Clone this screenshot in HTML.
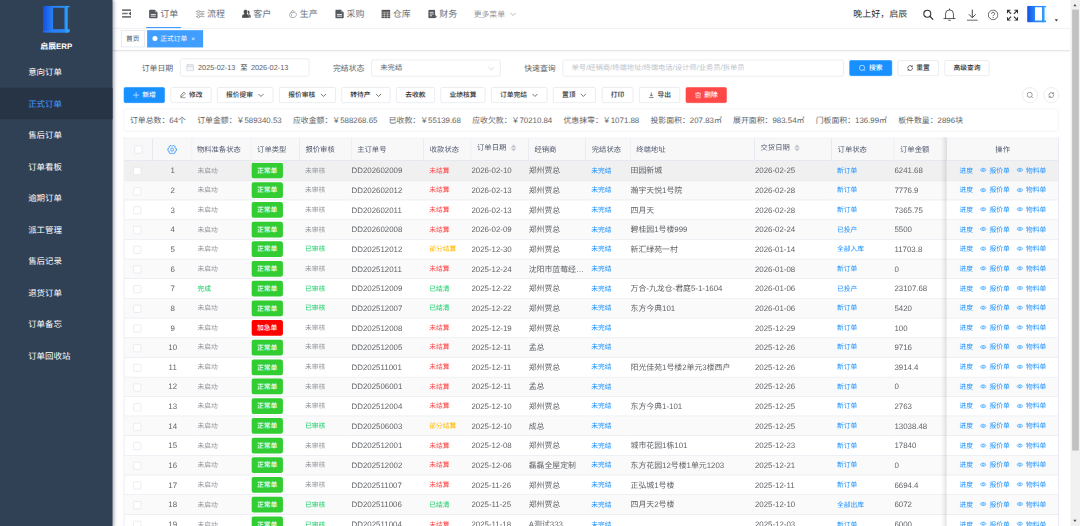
<!DOCTYPE html>
<html>
<head>
<meta charset="utf-8">
<title>启辰ERP - 正式订单</title>
<style>
*{box-sizing:border-box;margin:0;padding:0}
html,body{width:1080px;height:526px;overflow:hidden;background:#fff}
body{font-family:"Liberation Sans","Noto Sans CJK SC",sans-serif;text-rendering:geometricPrecision;}
#stage{position:absolute;left:0;top:0;width:1920px;height:935.2px;transform:scale(0.5625);transform-origin:0 0;overflow:hidden;background:#fff;color:#606266;font-size:14px}
/* sidebar */
#side{position:absolute;left:0;top:0;width:200px;height:936px;background:#304156;box-shadow:2px 0 6px rgba(0,21,41,.35);z-index:10}
#logo{position:absolute;left:76px;top:10px;width:48.500px;height:48px}
#brand{position:absolute;left:0;top:72px;width:200px;text-align:center;color:#fff;font-weight:bold;font-size:14px;line-height:20px}
.mi{position:absolute;left:0;width:200px;height:56px;line-height:60px;padding-left:50px;color:#fff;font-size:15px}
.mi.act{background:#263445;color:#409eff}
/* header */
#hdr{position:absolute;left:200px;top:0;width:1703px;height:51px;background:#fff;border-bottom:1px solid #eceef2}
#ham{position:absolute;left:17px;top:16px;width:16px;height:16px}
.tm{position:absolute;top:0;height:50px;line-height:53px;font-size:16px;color:#6e727a;white-space:nowrap;padding:0 5px;border-bottom:2px solid transparent}
.tm svg{width:16px;height:16px;vertical-align:-2px;margin-right:4px}
.tm.act{border-bottom-color:#409eff;color:#63676f}
#more{position:absolute;left:642px;top:0;line-height:53px;font-size:14px;color:#909399}
#hello{position:absolute;left:1317px;top:0;line-height:52px;font-size:16px;color:#303133;white-space:nowrap}
.hi{position:absolute;top:14px;width:20px;height:20px;color:#303133}
#avatar{position:absolute;left:1626px;top:10px;width:34px;height:30px}
#caret{position:absolute;left:1675px;top:34px;width:0;height:0;border:3.800px solid transparent;border-top:4.500px solid #3a3f4a}
/* tags */
#tags{position:absolute;left:200px;top:51px;width:1703px;height:39px;background:#fff;border-bottom:1px solid #d8dce5;box-shadow:0 1px 3px 0 rgba(0,0,0,.12),0 0 3px 0 rgba(0,0,0,.04)}
.tg1{position:absolute;top:3px;height:30px;line-height:28px;border:1px solid #d8dce5;font-size:12px;color:#495060;padding:0 8px;white-space:nowrap;background:#fff}
.tg1.act{background:#409eff;border-color:#409eff;color:#fff}
.tg1.act:before{content:"";display:inline-block;width:9px;height:9px;border-radius:50%;background:#fff;margin-right:5px;position:relative;top:0px}
/* form */
.lbl{position:absolute;top:105px;line-height:32px;font-size:14px;color:#606266;white-space:nowrap}
.inp{position:absolute;top:104px;height:32px;border:1px solid #dcdfe6;border-radius:4px;background:#fff;font-size:13px;color:#606266;line-height:30px;white-space:nowrap}
.ph{color:#c0c4cc}
.btn{position:absolute;height:28px;line-height:27.500px;border:1px solid #dcdfe6;border-radius:3px;background:#fff;font-size:12px;color:#303133;text-align:center;white-space:nowrap;font-weight:500}
.btn.pri{background:#1890ff;border-color:#1890ff;color:#fff}
.btn.dan{background:#ff4949;border-color:#ff4949;color:#fff}
.btn svg{width:12px;height:12px;vertical-align:-1.5px}
.btn .chev{margin-left:8px}
.circ{position:absolute;top:155px;width:28px;height:28px;border:1px solid #dcdfe6;border-radius:50%;background:#fff}
.circ svg{position:absolute;left:7px;top:7px;width:12px;height:12px}
/* stats */
#stats{position:absolute;left:220px;top:193px;width:1662px;height:41px;border:1px solid #ebeef5;border-radius:4px;font-size:14px;line-height:40px;padding-left:10px;color:#606266;white-space:nowrap;word-spacing:0}
#stats span{margin-right:20px}
/* table */
#tblwrap{position:absolute;left:220px;top:244.500px;width:1662px;height:700px;overflow:hidden;border-left:1px solid #d8dde8;border-right:1px solid #d8dde8;border-top:1px solid #d8dde8}
table{border-collapse:separate;border-spacing:0;table-layout:fixed;width:1661px;font-size:13px;color:#606266}
th{height:40px;background:#f8f8f9;border-right:1px solid #d8dde8;border-bottom:1px solid #d8dde8;text-align:left;padding-left:10px;font-weight:normal;color:#515a6e;font-size:13px;white-space:nowrap}
td{height:34.950px;border-bottom:1px solid #e1e6ee;padding-left:9px;white-space:nowrap;overflow:hidden;font-size:14px;color:#606266}
tr.hv td{height:36.200px}
tr.r2 td{height:34.400px}
.stripe{position:absolute;left:0;width:1661px;height:34.950px;background:#fafafa}
table{position:relative}
td.cbx{text-align:center;padding-left:0;padding-right:5px}
td.np{padding-left:0}
td.c,th.c{text-align:center;padding-left:0}
td.tg{padding-left:0}
.s12{font-size:12px;position:relative;top:-.800px}
.gray{color:#909399}.green{color:#13ce66}.red{color:#ff4949}.orange{color:#ffba00}.blue{color:#1890ff}
.tag{position:relative;top:0;display:inline-block;height:28px;line-height:28px;padding:0 10px;background:#32cd32;color:#fff;font-weight:500;font-size:12px;border-radius:4px;vertical-align:middle}
.tag.red{background:#ff0000}
.cb{display:inline-block;width:14px;height:14px;border:1px solid #dcdfe6;border-radius:2px;background:#fff;vertical-align:middle}
.ell{overflow:hidden;text-overflow:ellipsis;white-space:nowrap;width:99px}
td.op,th.op{text-align:center;padding-left:0;box-shadow:none}
.lk{color:#1890ff;font-size:12px;margin:0 6px;position:relative;top:-.800px}
.eye{width:12px;height:12px;vertical-align:-1.5px;margin-right:5px}
.sorter{display:inline-block;position:relative;width:10px;height:12px;vertical-align:-2px;margin-left:8px}
th.so{padding-bottom:6.500px}
.sorter:before{content:"";position:absolute;left:0;top:-5px;border:5px solid transparent;border-bottom-color:#c0c4cc}
.sorter:after{content:"";position:absolute;left:0;top:7px;border:5px solid transparent;border-top-color:#c0c4cc}
#fixshadow{position:absolute;left:1673px;top:244px;width:10px;height:700px;background:linear-gradient(to right,rgba(0,0,0,0),rgba(0,0,0,.10));pointer-events:none}
/* scrollbar */
#sb{position:absolute;left:1903px;top:0;width:17px;height:936px;background:#f1f1f1}
#sbthumb{position:absolute;left:2.500px;top:17px;width:12.500px;height:784px;background:#c1c1c1}
.arr{position:absolute;left:4.5px;width:0;height:0;border:4px solid transparent}
</style>
</head>
<body>
<div id="stage">

<div id="side">
  <svg id="logo" viewBox="0 0 49 49">
    <defs>
      <linearGradient id="lg1" x1="0" y1="0" x2="1" y2="0"><stop offset="0" stop-color="#1450e0"/><stop offset=".400" stop-color="#2a84f6"/><stop offset="1" stop-color="#2b9bff"/></linearGradient>
      <linearGradient id="lg2" x1="0" y1="0" x2="1" y2="0"><stop offset="0" stop-color="#1f86f8"/><stop offset="1" stop-color="#33b2ff"/></linearGradient>
    </defs>
    <path d="M3 0H46Q49 0 49 3V46Q49 49 46 49H3Q0 49 0 46V3Q0 0 3 0Z" fill="url(#lg1)"/>
    <path d="M18.500 4H39.500V43H18.500Z" fill="#304156"/><path d="M0 46.500L18.500 43H39.500L38.500 49H3Q0 49 0 46.500Z" fill="#2a7df5" opacity=".55"/>
    <path d="M39.500 0H45V49H39.500Z" fill="url(#lg2)"/>
    <path d="M45 3H49V43H45Z" fill="#304156"/>
  </svg>
  <div id="brand">启辰ERP</div>
  <div class="mi" style="top:100px">意向订单</div>
  <div class="mi act" style="top:156px">正式订单</div>
  <div class="mi" style="top:212px">售后订单</div>
  <div class="mi" style="top:268px">订单看板</div>
  <div class="mi" style="top:324px">逾期订单</div>
  <div class="mi" style="top:380px">派工管理</div>
  <div class="mi" style="top:436px">售后记录</div>
  <div class="mi" style="top:492px">退货订单</div>
  <div class="mi" style="top:548px">订单备忘</div>
  <div class="mi" style="top:604px">订单回收站</div>
</div>

<div id="hdr">
  <svg id="ham" viewBox="0 0 16 16"><path d="M0 .5h16v3H0zM0 6.500h10v3H0zM0 12.500h16v3H0z" fill="#777"/><path d="M16 4.500v7L11.500 8z" fill="#555"/></svg>
  <div class="tm act" style="left:60px"><svg viewBox="0 0 16 16"><path d="M2 0h8l5 5v9a2 2 0 0 1-2 2H2a2 2 0 0 1-2-2V2a2 2 0 0 1 2-2z" fill="#55585e"/><path d="M10.300 0v3.700a1 1 0 0 0 1 1H15z" fill="#9fa2a8"/><path d="M3 8.700h9M3 11.700h9" stroke="#fff" stroke-width="1.500"/></svg>订单</div>
  <div class="tm" style="left:143px"><svg viewBox="0 0 16 16"><path d="M0 3.500h16M0 8h16M0 12.500h16" stroke="#85888e" stroke-width="1.200" fill="none"/><circle cx="5" cy="3.500" r="2" fill="#fff" stroke="#85888e" stroke-width="1.200"/><circle cx="11" cy="8" r="2" fill="#fff" stroke="#85888e" stroke-width="1.200"/><circle cx="5" cy="12.500" r="2" fill="#fff" stroke="#85888e" stroke-width="1.200"/></svg>流程</div>
  <div class="tm" style="left:225px"><svg viewBox="0 0 16 16"><path d="M10.500 1.500a3.200 3.600 0 0 1 2.500 6c-.3.500-.2 1 .4 1.300 1.600.7 2.600 1.500 2.600 3.700v1.500h-3.500z" fill="#4d4d4d"/><path d="M6.500 0a3.600 4 0 0 1 2.700 6.800c-.4.600-.3 1.200.5 1.500 2 .8 3.300 1.800 3.300 4.500V15H0v-2.200c0-2.700 1.300-3.700 3.300-4.500.8-.3.900-.9.500-1.500A3.600 4 0 0 1 6.500 0z" fill="#4d4d4d" stroke="#fff" stroke-width=".6"/></svg>客户</div>
  <div class="tm" style="left:308px"><svg viewBox="0 0 16 16"><path d="M4.500 4.500L7.500 1l3 3.500M4 5h7l4 3.500-4 5.500H4L1.500 10z" fill="none" stroke="#8a8d93" stroke-width="1.200" stroke-linejoin="round"/><path d="M3.500 6.500c2.500.5 2.500 5 0 6" fill="none" stroke="#8a8d93" stroke-width="1.100"/></svg>生产</div>
  <div class="tm" style="left:391px"><svg viewBox="0 0 16 16"><path d="M2 0h8l5 5v9a2 2 0 0 1-2 2H2a2 2 0 0 1-2-2V2a2 2 0 0 1 2-2z" fill="#55585e"/><path d="M10.300 0v3.700a1 1 0 0 0 1 1H15z" fill="#9fa2a8"/><path d="M3 8.700h9M3 11.700h9" stroke="#fff" stroke-width="1.500"/></svg>采购</div>
  <div class="tm" style="left:473px"><svg viewBox="0 0 16 16"><path d="M0 .5h16v15H0z" fill="#4d4d4d"/><path d="M0 4.500h16M0 8.300h16M0 12h16M5.300 4.500v11M10.700 4.500v11" stroke="#fff" stroke-width=".8"/></svg>仓库</div>
  <div class="tm" style="left:556px"><svg viewBox="0 0 16 16"><path d="M2 .5h9a1.500 1.500 0 0 1 1.500 1.500v12a1.500 1.500 0 0 1-1.500 1.500H2A1.500 1.500 0 0 1 .5 14V2A1.500 1.500 0 0 1 2 .5z" fill="#55585e"/><path d="M3 5h7M3 8h7M3 11h4" stroke="#fff" stroke-width="1.300"/><path d="M9 12.500h5.500M12.500 10l2.500 2.500-2.500 2.500" fill="none" stroke="#55585e" stroke-width="1.600"/></svg>财务</div>
  <div id="more">更多菜单<svg viewBox="0 0 12 12" style="width:12px;height:12px;margin-left:8px;vertical-align:0px"><path d="M1.500 4L6 8.500 10.500 4" fill="none" stroke="#909399" stroke-width="1.200"/></svg></div>
  <div id="hello">晚上好，启辰</div>
  <svg class="hi" style="left:1440px;top:16px" viewBox="0 0 20 20"><circle cx="8.500" cy="8.500" r="6.200" fill="none" stroke="#303133" stroke-width="1.900"/><path d="M13 13l5.500 5.500" stroke="#303133" stroke-width="2.200" stroke-linecap="round"/></svg>
  <svg class="hi" style="left:1476px;top:14px;width:24px;height:24px" viewBox="0 0 24 24"><path d="M2 19h20M5 19v-8.500a7 7 0 0 1 14 0V19M10.500 22h3M12 3.500V2" fill="none" stroke="#303133" stroke-width="1.400" stroke-linecap="round"/></svg>
  <svg class="hi" style="left:1518px;top:16px;width:21px;height:21px" viewBox="0 0 21 21"><path d="M10.500 1v14M4.500 9.500l6 6 6-6M1 20h19" fill="none" stroke="#303133" stroke-width="1.600"/></svg>
  <svg class="hi" style="left:1556px;top:17px;width:19px;height:19px" viewBox="0 0 19 19"><circle cx="9.500" cy="9.500" r="8.500" fill="none" stroke="#303133" stroke-width="1.300"/><path d="M6.800 7.500a2.700 2.700 0 1 1 3.800 2.400c-.8.400-1.100.9-1.100 1.800" fill="none" stroke="#303133" stroke-width="1.300"/><circle cx="9.500" cy="14" r=".9" fill="#303133"/></svg>
  <svg class="hi" style="left:1590px;top:17px;width:20px;height:20px" viewBox="0 0 20 20"><path d="M1 6.500V1h5.500M1.500 1.500l6 6M19 6.500V1h-5.500M18.500 1.500l-6 6M1 13.500V19h5.500M1.500 18.500l6-6M19 13.500V19h-5.500M18.500 18.500l-6-6" fill="none" stroke="#303133" stroke-width="2"/></svg>
  <svg id="avatar" viewBox="0 0 34 30">
    <path d="M2 0H32Q34 0 34 2V28Q34 30 32 30H2Q0 30 0 28V2Q0 0 2 0Z" fill="url(#lg1)"/>
    <path d="M14 3H27V26.500H14Z" fill="#fff"/>
    <path d="M27 0H31V30H27Z" fill="url(#lg2)"/>
    <path d="M31 3H34V26.500H31Z" fill="#fff"/>
  </svg>
  <div id="caret"></div>
</div>

<div id="tags">
  <div class="tg1" style="left:15px">首页</div>
  <div class="tg1 act" style="left:62px;width:99px">正式订单<span style="margin-left:7px;font-size:11px;position:relative;top:-1px">×</span></div>
</div>

<!-- search form -->
<div class="lbl" style="left:252px">订单日期</div>
<div class="inp" style="left:320px;width:230px">
  <svg viewBox="0 0 14 14" style="position:absolute;left:10px;top:8px;width:14px;height:14px"><rect x="1" y="2" width="12" height="11" rx="1" fill="#f5f7fa" stroke="#c0c4cc" stroke-width="1"/><path d="M1 5.500h12M4 .5v3M10 .5v3" stroke="#c0c4cc" stroke-width="1"/></svg>
  <span style="position:absolute;left:31px">2025-02-13</span><span style="position:absolute;left:106px;color:#303133">至</span><span style="position:absolute;left:125px">2026-02-13</span>
</div>
<div class="lbl" style="left:592px;top:105px">完结状态</div>
<div class="inp" style="left:660px;width:230px;padding-left:15px;top:106px;height:30px;line-height:28px">未完结<svg viewBox="0 0 12 12" style="position:absolute;right:9px;top:8px;width:13px;height:13px"><path d="M1.500 4L6 8.500 10.500 4" fill="none" stroke="#c0c4cc" stroke-width="1.100"/></svg></div>
<div class="lbl" style="left:932px;top:105px">快速查询</div>
<div class="inp" style="left:1000px;width:500px;padding-left:15px;top:106px;height:30px;line-height:28px"><span class="ph">单号/经销商/终端地址/终端电话/设计师/业务员/拆单员</span></div>
<div class="btn pri" style="left:1510px;top:107px;width:76px"><svg viewBox="0 0 12 12" style="margin-right:6px"><circle cx="5.500" cy="5.500" r="4.700" fill="none" stroke="#fff" stroke-width="1.100"/><path d="M9 9l2.700 2.700" stroke="#fff" stroke-width="1.100"/></svg>搜索</div>
<div class="btn" style="left:1596px;top:107px;width:73px"><svg viewBox="0 0 12 12" style="margin-right:5px"><path d="M1.800 6.800A4.300 4.300 0 0 1 9.300 3.200M10.200 5.200A4.300 4.300 0 0 1 2.700 8.800" fill="none" stroke="#303133" stroke-width="1.200"/><path d="M9.800 1v2.600H7.200M2.200 11V8.400h2.600" fill="none" stroke="#303133" stroke-width="1.100"/></svg>重置</div>
<div class="btn" style="left:1679px;top:107px;width:80px">高级查询</div>

<!-- toolbar -->
<div class="btn pri" style="left:220px;top:155px;width:73px"><svg viewBox="0 0 12 12" style="margin-right:5px"><path d="M6 .5v11M.5 6h11" stroke="#fff" stroke-width="1"/></svg>新增</div>
<div class="btn" style="left:303px;top:155px;width:73px"><svg viewBox="0 0 12 12" style="margin-right:5px"><path d="M8 .8l2.200 2.200L5 8.200l-2.700.5.500-2.700zM1.500 10.800h9" fill="none" stroke="#303133" stroke-width="1"/></svg>修改</div>
<div class="btn" style="left:386px;top:155px;width:100px">报价提审<svg class="chev" viewBox="0 0 12 12"><path d="M1.500 4L6 8.500 10.500 4" fill="none" stroke="#303133" stroke-width="1.200"/></svg></div>
<div class="btn" style="left:496px;top:155px;width:101px">报价审核<svg class="chev" viewBox="0 0 12 12"><path d="M1.500 4L6 8.500 10.500 4" fill="none" stroke="#303133" stroke-width="1.200"/></svg></div>
<div class="btn" style="left:607px;top:155px;width:87px">转待产<svg class="chev" viewBox="0 0 12 12"><path d="M1.500 4L6 8.500 10.500 4" fill="none" stroke="#303133" stroke-width="1.200"/></svg></div>
<div class="btn" style="left:704px;top:155px;width:69px">去收款</div>
<div class="btn" style="left:783px;top:155px;width:80px">业绩核算</div>
<div class="btn" style="left:873px;top:155px;width:100px">订单完结<svg class="chev" viewBox="0 0 12 12"><path d="M1.500 4L6 8.500 10.500 4" fill="none" stroke="#303133" stroke-width="1.200"/></svg></div>
<div class="btn" style="left:983px;top:155px;width:76px">置顶<svg class="chev" viewBox="0 0 12 12"><path d="M1.500 4L6 8.500 10.500 4" fill="none" stroke="#303133" stroke-width="1.200"/></svg></div>
<div class="btn" style="left:1070px;top:155px;width:56px">打印</div>
<div class="btn" style="left:1136px;top:155px;width:73px"><svg viewBox="0 0 12 12" style="margin-right:5px"><path d="M6 1.500v6M3.500 5.500L6 8l2.500-2.500M2 10.500h8" fill="none" stroke="#303133" stroke-width="1.100"/></svg>导出</div>
<div class="btn dan" style="left:1219px;top:155px;width:73px"><svg viewBox="0 0 12 12" style="margin-right:5px"><path d="M1 3h10M4.500 3V1.500h3V3M2.500 3v8h7V3M5 5.500v3M7 5.500v3" fill="none" stroke="#fff" stroke-width="1.100"/></svg>删除</div>
<div class="circ" style="left:1817px"><svg viewBox="0 0 12 12"><circle cx="5.500" cy="5.500" r="4.500" fill="none" stroke="#606266" stroke-width="1.100"/><path d="M8.800 8.800L11.500 11.500" stroke="#606266" stroke-width="1.100"/></svg></div>
<div class="circ" style="left:1855px"><svg viewBox="0 0 12 12"><path d="M1.800 6.800A4.300 4.300 0 0 1 9.300 3.200M10.200 5.200A4.300 4.300 0 0 1 2.700 8.800" fill="none" stroke="#606266" stroke-width="1.200"/><path d="M9.800 1v2.600H7.200M2.200 11V8.400h2.600" fill="none" stroke="#606266" stroke-width="1.100"/></svg></div>

<div id="stats"><span>订单总数：64个</span><span>订单金额：￥589340.53</span><span>应收金额：￥588268.65</span><span>已收款：￥55139.68</span><span>应收欠款：￥70210.84</span><span>优惠抹零：￥1071.88</span><span>投影面积：207.83㎡</span><span>展开面积：983.54㎡</span><span>门板面积：136.99㎡</span><span>板件数量：2896块</span></div>

<div id="tblwrap">
<div class="stripe" style="top:40px;height:36.190px;background:#f0f0f0"></div>
<div class="stripe" style="top:76.190px;height:34.390px"></div>
<div class="stripe" style="top:145.516px;height:34.940px"></div>
<div class="stripe" style="top:215.391px;height:34.940px"></div>
<div class="stripe" style="top:285.266px;height:34.940px"></div>
<div class="stripe" style="top:355.141px;height:34.940px"></div>
<div class="stripe" style="top:425.016px;height:34.940px"></div>
<div class="stripe" style="top:494.891px;height:34.940px"></div>
<div class="stripe" style="top:564.766px;height:34.940px"></div>
<div class="stripe" style="top:634.641px;height:34.940px"></div>
<table>
<colgroup><col style="width:51px"><col style="width:70px"><col style="width:105px"><col style="width:86px"><col style="width:92px"><col style="width:129px"><col style="width:84px"><col style="width:102px"><col style="width:102px"><col style="width:79px"><col style="width:221px"><col style="width:137px"><col style="width:111px"><col style="width:94px"><col style="width:198px"></colgroup>
<thead><tr>
<th class="c"><span class="cb"></span></th>
<th class="c"><svg viewBox="0 0 18 18" style="width:18px;height:18px;vertical-align:middle;position:relative;left:-1px;top:.500px"><path d="M15.11 6.78L16.57 7.11L16.57 10.89L15.11 11.22L13.98 13.18L14.42 14.61L11.15 16.50L10.13 15.40L7.87 15.40L6.85 16.50L3.58 14.61L4.02 13.18L2.89 11.22L1.43 10.89L1.43 7.11L2.89 6.78L4.02 4.82L3.58 3.39L6.85 1.50L7.87 2.60L10.13 2.60L11.15 1.50L14.42 3.39L13.98 4.82Z" fill="none" stroke="#3d9bff" stroke-width="1.700" stroke-linejoin="round"/><circle cx="9" cy="9" r="2.700" fill="none" stroke="#3d9bff" stroke-width="1.600"/></svg></th>
<th style="padding-left:8px">物料准备状态</th><th>订单类型</th><th>报价审核</th><th>主订单号</th><th>收款状态</th>
<th class="so">订单日期<span class="sorter"></span></th><th>经销商</th><th>完结状态</th><th>终端地址</th>
<th class="so">交货日期<span class="sorter"></span></th><th>订单状态</th><th>订单金额</th><th class="op">操作</th>
</tr></thead>
<tbody>
<tr class="hv"><td class="cbx"><span class="cb"></span></td><td class="c idx">1</td><td><span class="gray s12">未启动</span></td><td class="tg"><span class="tag">正常单</span></td><td><span class="gray s12">未审核</span></td><td class="np">DD202602009</td><td><span class="red s12">未结算</span></td><td class="np">2026-02-10</td><td class="np"><div class="ell">郑州贾总</div></td><td><span class="blue s12">未完结</span></td><td class="np">田园新城</td><td class="np">2026-02-25</td><td><span class="blue s12">新订单</span></td><td class="np">6241.68</td><td class="op"><span class="lk">进度</span><span class="lk"><svg class="eye" viewBox="0 0 12 12"><path d="M.6 6C2.600 2.300 9.400 2.300 11.400 6 9.400 9.700 2.600 9.700.6 6z" fill="none" stroke="currentColor" stroke-width="1"/><circle cx="6" cy="6" r="1.900" fill="none" stroke="currentColor" stroke-width="1"/></svg>报价单</span><span class="lk"><svg class="eye" viewBox="0 0 12 12"><path d="M.6 6C2.600 2.300 9.400 2.300 11.400 6 9.400 9.700 2.600 9.700.6 6z" fill="none" stroke="currentColor" stroke-width="1"/><circle cx="6" cy="6" r="1.900" fill="none" stroke="currentColor" stroke-width="1"/></svg>物料单</span></td></tr>
<tr class="st r2"><td class="cbx"><span class="cb"></span></td><td class="c idx">2</td><td><span class="gray s12">未启动</span></td><td class="tg"><span class="tag">正常单</span></td><td><span class="gray s12">未审核</span></td><td class="np">DD202602012</td><td><span class="red s12">未结算</span></td><td class="np">2026-02-13</td><td class="np"><div class="ell">郑州贾总</div></td><td><span class="blue s12">未完结</span></td><td class="np">瀚宇天悦1号院</td><td class="np">2026-02-28</td><td><span class="blue s12">新订单</span></td><td class="np">7776.9</td><td class="op"><span class="lk">进度</span><span class="lk"><svg class="eye" viewBox="0 0 12 12"><path d="M.6 6C2.600 2.300 9.400 2.300 11.400 6 9.400 9.700 2.600 9.700.6 6z" fill="none" stroke="currentColor" stroke-width="1"/><circle cx="6" cy="6" r="1.900" fill="none" stroke="currentColor" stroke-width="1"/></svg>报价单</span><span class="lk"><svg class="eye" viewBox="0 0 12 12"><path d="M.6 6C2.600 2.300 9.400 2.300 11.400 6 9.400 9.700 2.600 9.700.6 6z" fill="none" stroke="currentColor" stroke-width="1"/><circle cx="6" cy="6" r="1.900" fill="none" stroke="currentColor" stroke-width="1"/></svg>物料单</span></td></tr>
<tr class=""><td class="cbx"><span class="cb"></span></td><td class="c idx">3</td><td><span class="gray s12">未启动</span></td><td class="tg"><span class="tag">正常单</span></td><td><span class="gray s12">未审核</span></td><td class="np">DD202602011</td><td><span class="red s12">未结算</span></td><td class="np">2026-02-13</td><td class="np"><div class="ell">郑州贾总</div></td><td><span class="blue s12">未完结</span></td><td class="np">四月天</td><td class="np">2026-02-28</td><td><span class="blue s12">新订单</span></td><td class="np">7365.75</td><td class="op"><span class="lk">进度</span><span class="lk"><svg class="eye" viewBox="0 0 12 12"><path d="M.6 6C2.600 2.300 9.400 2.300 11.400 6 9.400 9.700 2.600 9.700.6 6z" fill="none" stroke="currentColor" stroke-width="1"/><circle cx="6" cy="6" r="1.900" fill="none" stroke="currentColor" stroke-width="1"/></svg>报价单</span><span class="lk"><svg class="eye" viewBox="0 0 12 12"><path d="M.6 6C2.600 2.300 9.400 2.300 11.400 6 9.400 9.700 2.600 9.700.6 6z" fill="none" stroke="currentColor" stroke-width="1"/><circle cx="6" cy="6" r="1.900" fill="none" stroke="currentColor" stroke-width="1"/></svg>物料单</span></td></tr>
<tr class="st"><td class="cbx"><span class="cb"></span></td><td class="c idx">4</td><td><span class="gray s12">未启动</span></td><td class="tg"><span class="tag">正常单</span></td><td><span class="gray s12">未审核</span></td><td class="np">DD202602008</td><td><span class="red s12">未结算</span></td><td class="np">2026-02-09</td><td class="np"><div class="ell">郑州贾总</div></td><td><span class="blue s12">未完结</span></td><td class="np">碧桂园1号楼999</td><td class="np">2026-02-24</td><td><span class="blue s12">已投产</span></td><td class="np">5500</td><td class="op"><span class="lk">进度</span><span class="lk"><svg class="eye" viewBox="0 0 12 12"><path d="M.6 6C2.600 2.300 9.400 2.300 11.400 6 9.400 9.700 2.600 9.700.6 6z" fill="none" stroke="currentColor" stroke-width="1"/><circle cx="6" cy="6" r="1.900" fill="none" stroke="currentColor" stroke-width="1"/></svg>报价单</span><span class="lk"><svg class="eye" viewBox="0 0 12 12"><path d="M.6 6C2.600 2.300 9.400 2.300 11.400 6 9.400 9.700 2.600 9.700.6 6z" fill="none" stroke="currentColor" stroke-width="1"/><circle cx="6" cy="6" r="1.900" fill="none" stroke="currentColor" stroke-width="1"/></svg>物料单</span></td></tr>
<tr class=""><td class="cbx"><span class="cb"></span></td><td class="c idx">5</td><td><span class="gray s12">未启动</span></td><td class="tg"><span class="tag">正常单</span></td><td><span class="green s12">已审核</span></td><td class="np">DD202512012</td><td><span class="orange s12">部分结算</span></td><td class="np">2025-12-30</td><td class="np"><div class="ell">郑州贾总</div></td><td><span class="blue s12">未完结</span></td><td class="np">新汇绿苑一村</td><td class="np">2026-01-14</td><td><span class="blue s12">全部入库</span></td><td class="np">11703.8</td><td class="op"><span class="lk">进度</span><span class="lk"><svg class="eye" viewBox="0 0 12 12"><path d="M.6 6C2.600 2.300 9.400 2.300 11.400 6 9.400 9.700 2.600 9.700.6 6z" fill="none" stroke="currentColor" stroke-width="1"/><circle cx="6" cy="6" r="1.900" fill="none" stroke="currentColor" stroke-width="1"/></svg>报价单</span><span class="lk"><svg class="eye" viewBox="0 0 12 12"><path d="M.6 6C2.600 2.300 9.400 2.300 11.400 6 9.400 9.700 2.600 9.700.6 6z" fill="none" stroke="currentColor" stroke-width="1"/><circle cx="6" cy="6" r="1.900" fill="none" stroke="currentColor" stroke-width="1"/></svg>物料单</span></td></tr>
<tr class="st"><td class="cbx"><span class="cb"></span></td><td class="c idx">6</td><td><span class="gray s12">未启动</span></td><td class="tg"><span class="tag">正常单</span></td><td><span class="gray s12">未审核</span></td><td class="np">DD202512011</td><td><span class="red s12">未结算</span></td><td class="np">2025-12-24</td><td class="np"><div class="ell">沈阳市蓝莓经销商</div></td><td><span class="blue s12">未完结</span></td><td class="np"></td><td class="np">2026-01-08</td><td><span class="blue s12">新订单</span></td><td class="np">0</td><td class="op"><span class="lk">进度</span><span class="lk"><svg class="eye" viewBox="0 0 12 12"><path d="M.6 6C2.600 2.300 9.400 2.300 11.400 6 9.400 9.700 2.600 9.700.6 6z" fill="none" stroke="currentColor" stroke-width="1"/><circle cx="6" cy="6" r="1.900" fill="none" stroke="currentColor" stroke-width="1"/></svg>报价单</span><span class="lk"><svg class="eye" viewBox="0 0 12 12"><path d="M.6 6C2.600 2.300 9.400 2.300 11.400 6 9.400 9.700 2.600 9.700.6 6z" fill="none" stroke="currentColor" stroke-width="1"/><circle cx="6" cy="6" r="1.900" fill="none" stroke="currentColor" stroke-width="1"/></svg>物料单</span></td></tr>
<tr class=""><td class="cbx"><span class="cb"></span></td><td class="c idx">7</td><td><span class="green s12">完成</span></td><td class="tg"><span class="tag">正常单</span></td><td><span class="green s12">已审核</span></td><td class="np">DD202512009</td><td><span class="green s12">已结清</span></td><td class="np">2025-12-22</td><td class="np"><div class="ell">郑州贾总</div></td><td><span class="blue s12">未完结</span></td><td class="np">万合-九龙仓-君庭5-1-1604</td><td class="np">2026-01-06</td><td><span class="blue s12">已投产</span></td><td class="np">23107.68</td><td class="op"><span class="lk">进度</span><span class="lk"><svg class="eye" viewBox="0 0 12 12"><path d="M.6 6C2.600 2.300 9.400 2.300 11.400 6 9.400 9.700 2.600 9.700.6 6z" fill="none" stroke="currentColor" stroke-width="1"/><circle cx="6" cy="6" r="1.900" fill="none" stroke="currentColor" stroke-width="1"/></svg>报价单</span><span class="lk"><svg class="eye" viewBox="0 0 12 12"><path d="M.6 6C2.600 2.300 9.400 2.300 11.400 6 9.400 9.700 2.600 9.700.6 6z" fill="none" stroke="currentColor" stroke-width="1"/><circle cx="6" cy="6" r="1.900" fill="none" stroke="currentColor" stroke-width="1"/></svg>物料单</span></td></tr>
<tr class="st"><td class="cbx"><span class="cb"></span></td><td class="c idx">8</td><td><span class="gray s12">未启动</span></td><td class="tg"><span class="tag">正常单</span></td><td><span class="green s12">已审核</span></td><td class="np">DD202512007</td><td><span class="green s12">已结清</span></td><td class="np">2025-12-22</td><td class="np"><div class="ell">郑州贾总</div></td><td><span class="blue s12">未完结</span></td><td class="np">东方今典101</td><td class="np">2026-01-06</td><td><span class="blue s12">新订单</span></td><td class="np">5420</td><td class="op"><span class="lk">进度</span><span class="lk"><svg class="eye" viewBox="0 0 12 12"><path d="M.6 6C2.600 2.300 9.400 2.300 11.400 6 9.400 9.700 2.600 9.700.6 6z" fill="none" stroke="currentColor" stroke-width="1"/><circle cx="6" cy="6" r="1.900" fill="none" stroke="currentColor" stroke-width="1"/></svg>报价单</span><span class="lk"><svg class="eye" viewBox="0 0 12 12"><path d="M.6 6C2.600 2.300 9.400 2.300 11.400 6 9.400 9.700 2.600 9.700.6 6z" fill="none" stroke="currentColor" stroke-width="1"/><circle cx="6" cy="6" r="1.900" fill="none" stroke="currentColor" stroke-width="1"/></svg>物料单</span></td></tr>
<tr class=""><td class="cbx"><span class="cb"></span></td><td class="c idx">9</td><td><span class="gray s12">未启动</span></td><td class="tg"><span class="tag red">加急单</span></td><td><span class="gray s12">未审核</span></td><td class="np">DD202512008</td><td><span class="red s12">未结算</span></td><td class="np">2025-12-19</td><td class="np"><div class="ell">郑州贾总</div></td><td><span class="blue s12">未完结</span></td><td class="np"></td><td class="np">2025-12-29</td><td><span class="blue s12">新订单</span></td><td class="np">100</td><td class="op"><span class="lk">进度</span><span class="lk"><svg class="eye" viewBox="0 0 12 12"><path d="M.6 6C2.600 2.300 9.400 2.300 11.400 6 9.400 9.700 2.600 9.700.6 6z" fill="none" stroke="currentColor" stroke-width="1"/><circle cx="6" cy="6" r="1.900" fill="none" stroke="currentColor" stroke-width="1"/></svg>报价单</span><span class="lk"><svg class="eye" viewBox="0 0 12 12"><path d="M.6 6C2.600 2.300 9.400 2.300 11.400 6 9.400 9.700 2.600 9.700.6 6z" fill="none" stroke="currentColor" stroke-width="1"/><circle cx="6" cy="6" r="1.900" fill="none" stroke="currentColor" stroke-width="1"/></svg>物料单</span></td></tr>
<tr class="st"><td class="cbx"><span class="cb"></span></td><td class="c idx">10</td><td><span class="gray s12">未启动</span></td><td class="tg"><span class="tag">正常单</span></td><td><span class="gray s12">未审核</span></td><td class="np">DD202512005</td><td><span class="red s12">未结算</span></td><td class="np">2025-12-11</td><td class="np"><div class="ell">孟总</div></td><td><span class="blue s12">未完结</span></td><td class="np"></td><td class="np">2025-12-26</td><td><span class="blue s12">新订单</span></td><td class="np">9716</td><td class="op"><span class="lk">进度</span><span class="lk"><svg class="eye" viewBox="0 0 12 12"><path d="M.6 6C2.600 2.300 9.400 2.300 11.400 6 9.400 9.700 2.600 9.700.6 6z" fill="none" stroke="currentColor" stroke-width="1"/><circle cx="6" cy="6" r="1.900" fill="none" stroke="currentColor" stroke-width="1"/></svg>报价单</span><span class="lk"><svg class="eye" viewBox="0 0 12 12"><path d="M.6 6C2.600 2.300 9.400 2.300 11.400 6 9.400 9.700 2.600 9.700.6 6z" fill="none" stroke="currentColor" stroke-width="1"/><circle cx="6" cy="6" r="1.900" fill="none" stroke="currentColor" stroke-width="1"/></svg>物料单</span></td></tr>
<tr class=""><td class="cbx"><span class="cb"></span></td><td class="c idx">11</td><td><span class="gray s12">未启动</span></td><td class="tg"><span class="tag">正常单</span></td><td><span class="gray s12">未审核</span></td><td class="np">DD202511001</td><td><span class="red s12">未结算</span></td><td class="np">2025-12-11</td><td class="np"><div class="ell">郑州贾总</div></td><td><span class="blue s12">未完结</span></td><td class="np">阳光佳苑1号楼2单元3楼西户</td><td class="np">2025-12-26</td><td><span class="blue s12">新订单</span></td><td class="np">3914.4</td><td class="op"><span class="lk">进度</span><span class="lk"><svg class="eye" viewBox="0 0 12 12"><path d="M.6 6C2.600 2.300 9.400 2.300 11.400 6 9.400 9.700 2.600 9.700.6 6z" fill="none" stroke="currentColor" stroke-width="1"/><circle cx="6" cy="6" r="1.900" fill="none" stroke="currentColor" stroke-width="1"/></svg>报价单</span><span class="lk"><svg class="eye" viewBox="0 0 12 12"><path d="M.6 6C2.600 2.300 9.400 2.300 11.400 6 9.400 9.700 2.600 9.700.6 6z" fill="none" stroke="currentColor" stroke-width="1"/><circle cx="6" cy="6" r="1.900" fill="none" stroke="currentColor" stroke-width="1"/></svg>物料单</span></td></tr>
<tr class="st"><td class="cbx"><span class="cb"></span></td><td class="c idx">12</td><td><span class="gray s12">未启动</span></td><td class="tg"><span class="tag">正常单</span></td><td><span class="gray s12">未审核</span></td><td class="np">DD202506001</td><td><span class="red s12">未结算</span></td><td class="np">2025-12-11</td><td class="np"><div class="ell">孟总</div></td><td><span class="blue s12">未完结</span></td><td class="np"></td><td class="np">2025-12-26</td><td><span class="blue s12">新订单</span></td><td class="np">0</td><td class="op"><span class="lk">进度</span><span class="lk"><svg class="eye" viewBox="0 0 12 12"><path d="M.6 6C2.600 2.300 9.400 2.300 11.400 6 9.400 9.700 2.600 9.700.6 6z" fill="none" stroke="currentColor" stroke-width="1"/><circle cx="6" cy="6" r="1.900" fill="none" stroke="currentColor" stroke-width="1"/></svg>报价单</span><span class="lk"><svg class="eye" viewBox="0 0 12 12"><path d="M.6 6C2.600 2.300 9.400 2.300 11.400 6 9.400 9.700 2.600 9.700.6 6z" fill="none" stroke="currentColor" stroke-width="1"/><circle cx="6" cy="6" r="1.900" fill="none" stroke="currentColor" stroke-width="1"/></svg>物料单</span></td></tr>
<tr class=""><td class="cbx"><span class="cb"></span></td><td class="c idx">13</td><td><span class="gray s12">未启动</span></td><td class="tg"><span class="tag">正常单</span></td><td><span class="gray s12">未审核</span></td><td class="np">DD202512004</td><td><span class="red s12">未结算</span></td><td class="np">2025-12-10</td><td class="np"><div class="ell">郑州贾总</div></td><td><span class="blue s12">未完结</span></td><td class="np">东方今典1-101</td><td class="np">2025-12-25</td><td><span class="blue s12">新订单</span></td><td class="np">2763</td><td class="op"><span class="lk">进度</span><span class="lk"><svg class="eye" viewBox="0 0 12 12"><path d="M.6 6C2.600 2.300 9.400 2.300 11.400 6 9.400 9.700 2.600 9.700.6 6z" fill="none" stroke="currentColor" stroke-width="1"/><circle cx="6" cy="6" r="1.900" fill="none" stroke="currentColor" stroke-width="1"/></svg>报价单</span><span class="lk"><svg class="eye" viewBox="0 0 12 12"><path d="M.6 6C2.600 2.300 9.400 2.300 11.400 6 9.400 9.700 2.600 9.700.6 6z" fill="none" stroke="currentColor" stroke-width="1"/><circle cx="6" cy="6" r="1.900" fill="none" stroke="currentColor" stroke-width="1"/></svg>物料单</span></td></tr>
<tr class="st"><td class="cbx"><span class="cb"></span></td><td class="c idx">14</td><td><span class="gray s12">未启动</span></td><td class="tg"><span class="tag">正常单</span></td><td><span class="green s12">已审核</span></td><td class="np">DD202506003</td><td><span class="orange s12">部分结算</span></td><td class="np">2025-12-10</td><td class="np"><div class="ell">成总</div></td><td><span class="blue s12">未完结</span></td><td class="np"></td><td class="np">2025-12-25</td><td><span class="blue s12">新订单</span></td><td class="np">13038.48</td><td class="op"><span class="lk">进度</span><span class="lk"><svg class="eye" viewBox="0 0 12 12"><path d="M.6 6C2.600 2.300 9.400 2.300 11.400 6 9.400 9.700 2.600 9.700.6 6z" fill="none" stroke="currentColor" stroke-width="1"/><circle cx="6" cy="6" r="1.900" fill="none" stroke="currentColor" stroke-width="1"/></svg>报价单</span><span class="lk"><svg class="eye" viewBox="0 0 12 12"><path d="M.6 6C2.600 2.300 9.400 2.300 11.400 6 9.400 9.700 2.600 9.700.6 6z" fill="none" stroke="currentColor" stroke-width="1"/><circle cx="6" cy="6" r="1.900" fill="none" stroke="currentColor" stroke-width="1"/></svg>物料单</span></td></tr>
<tr class=""><td class="cbx"><span class="cb"></span></td><td class="c idx">15</td><td><span class="gray s12">未启动</span></td><td class="tg"><span class="tag">正常单</span></td><td><span class="gray s12">未审核</span></td><td class="np">DD202512001</td><td><span class="red s12">未结算</span></td><td class="np">2025-12-08</td><td class="np"><div class="ell">郑州贾总</div></td><td><span class="blue s12">未完结</span></td><td class="np">城市花园1栋101</td><td class="np">2025-12-23</td><td><span class="blue s12">新订单</span></td><td class="np">17840</td><td class="op"><span class="lk">进度</span><span class="lk"><svg class="eye" viewBox="0 0 12 12"><path d="M.6 6C2.600 2.300 9.400 2.300 11.400 6 9.400 9.700 2.600 9.700.6 6z" fill="none" stroke="currentColor" stroke-width="1"/><circle cx="6" cy="6" r="1.900" fill="none" stroke="currentColor" stroke-width="1"/></svg>报价单</span><span class="lk"><svg class="eye" viewBox="0 0 12 12"><path d="M.6 6C2.600 2.300 9.400 2.300 11.400 6 9.400 9.700 2.600 9.700.6 6z" fill="none" stroke="currentColor" stroke-width="1"/><circle cx="6" cy="6" r="1.900" fill="none" stroke="currentColor" stroke-width="1"/></svg>物料单</span></td></tr>
<tr class="st"><td class="cbx"><span class="cb"></span></td><td class="c idx">16</td><td><span class="gray s12">未启动</span></td><td class="tg"><span class="tag">正常单</span></td><td><span class="gray s12">未审核</span></td><td class="np">DD202512002</td><td><span class="red s12">未结算</span></td><td class="np">2025-12-06</td><td class="np"><div class="ell">磊磊全屋定制</div></td><td><span class="blue s12">未完结</span></td><td class="np">东方花园12号楼1单元1203</td><td class="np">2025-12-21</td><td><span class="blue s12">新订单</span></td><td class="np">0</td><td class="op"><span class="lk">进度</span><span class="lk"><svg class="eye" viewBox="0 0 12 12"><path d="M.6 6C2.600 2.300 9.400 2.300 11.400 6 9.400 9.700 2.600 9.700.6 6z" fill="none" stroke="currentColor" stroke-width="1"/><circle cx="6" cy="6" r="1.900" fill="none" stroke="currentColor" stroke-width="1"/></svg>报价单</span><span class="lk"><svg class="eye" viewBox="0 0 12 12"><path d="M.6 6C2.600 2.300 9.400 2.300 11.400 6 9.400 9.700 2.600 9.700.6 6z" fill="none" stroke="currentColor" stroke-width="1"/><circle cx="6" cy="6" r="1.900" fill="none" stroke="currentColor" stroke-width="1"/></svg>物料单</span></td></tr>
<tr class=""><td class="cbx"><span class="cb"></span></td><td class="c idx">17</td><td><span class="gray s12">未启动</span></td><td class="tg"><span class="tag">正常单</span></td><td><span class="gray s12">未审核</span></td><td class="np">DD202511007</td><td><span class="red s12">未结算</span></td><td class="np">2025-11-26</td><td class="np"><div class="ell">郑州贾总</div></td><td><span class="blue s12">未完结</span></td><td class="np">正弘城1号楼</td><td class="np">2025-12-11</td><td><span class="blue s12">新订单</span></td><td class="np">6694.4</td><td class="op"><span class="lk">进度</span><span class="lk"><svg class="eye" viewBox="0 0 12 12"><path d="M.6 6C2.600 2.300 9.400 2.300 11.400 6 9.400 9.700 2.600 9.700.6 6z" fill="none" stroke="currentColor" stroke-width="1"/><circle cx="6" cy="6" r="1.900" fill="none" stroke="currentColor" stroke-width="1"/></svg>报价单</span><span class="lk"><svg class="eye" viewBox="0 0 12 12"><path d="M.6 6C2.600 2.300 9.400 2.300 11.400 6 9.400 9.700 2.600 9.700.6 6z" fill="none" stroke="currentColor" stroke-width="1"/><circle cx="6" cy="6" r="1.900" fill="none" stroke="currentColor" stroke-width="1"/></svg>物料单</span></td></tr>
<tr class="st"><td class="cbx"><span class="cb"></span></td><td class="c idx">18</td><td><span class="gray s12">未启动</span></td><td class="tg"><span class="tag">正常单</span></td><td><span class="green s12">已审核</span></td><td class="np">DD202511006</td><td><span class="green s12">已结清</span></td><td class="np">2025-11-25</td><td class="np"><div class="ell">郑州贾总</div></td><td><span class="blue s12">未完结</span></td><td class="np">四月天2号楼</td><td class="np">2025-12-10</td><td><span class="blue s12">全部出库</span></td><td class="np">6072</td><td class="op"><span class="lk">进度</span><span class="lk"><svg class="eye" viewBox="0 0 12 12"><path d="M.6 6C2.600 2.300 9.400 2.300 11.400 6 9.400 9.700 2.600 9.700.6 6z" fill="none" stroke="currentColor" stroke-width="1"/><circle cx="6" cy="6" r="1.900" fill="none" stroke="currentColor" stroke-width="1"/></svg>报价单</span><span class="lk"><svg class="eye" viewBox="0 0 12 12"><path d="M.6 6C2.600 2.300 9.400 2.300 11.400 6 9.400 9.700 2.600 9.700.6 6z" fill="none" stroke="currentColor" stroke-width="1"/><circle cx="6" cy="6" r="1.900" fill="none" stroke="currentColor" stroke-width="1"/></svg>物料单</span></td></tr>
<tr class=""><td class="cbx"><span class="cb"></span></td><td class="c idx">19</td><td><span class="gray s12">未启动</span></td><td class="tg"><span class="tag">正常单</span></td><td><span class="green s12">已审核</span></td><td class="np">DD202511004</td><td><span class="red s12">未结算</span></td><td class="np">2025-11-18</td><td class="np"><div class="ell">A测试333</div></td><td><span class="blue s12">未完结</span></td><td class="np"></td><td class="np">2025-12-03</td><td><span class="blue s12">新订单</span></td><td class="np">6000</td><td class="op"><span class="lk">进度</span><span class="lk"><svg class="eye" viewBox="0 0 12 12"><path d="M.6 6C2.600 2.300 9.400 2.300 11.400 6 9.400 9.700 2.600 9.700.6 6z" fill="none" stroke="currentColor" stroke-width="1"/><circle cx="6" cy="6" r="1.900" fill="none" stroke="currentColor" stroke-width="1"/></svg>报价单</span><span class="lk"><svg class="eye" viewBox="0 0 12 12"><path d="M.6 6C2.600 2.300 9.400 2.300 11.400 6 9.400 9.700 2.600 9.700.6 6z" fill="none" stroke="currentColor" stroke-width="1"/><circle cx="6" cy="6" r="1.900" fill="none" stroke="currentColor" stroke-width="1"/></svg>物料单</span></td></tr>
</tbody>
</table>
</div>
<div id="fixshadow"></div>

<div id="sb">
  <div class="arr" style="top:6.500px;border-width:3.300px;border-bottom:4px solid #505050;border-top:0;left:5.200px"></div>
  <div id="sbthumb"></div>
  <div class="arr" style="top:923.500px;border-width:3.300px;border-top:4px solid #505050;border-bottom:0;left:5.200px"></div>
</div>

</div>
</body>
</html>
